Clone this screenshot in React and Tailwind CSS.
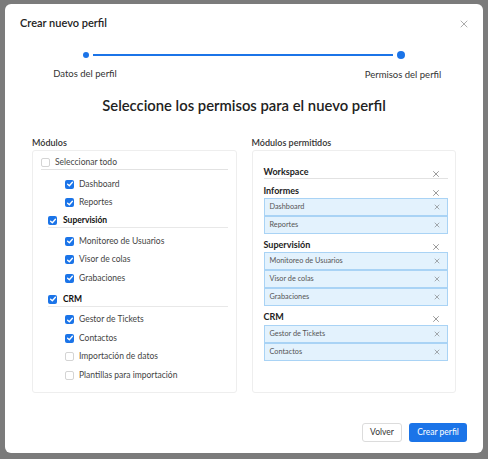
import { X } from 'lucide-react';

const font = { fontFamily: 'Lato, "Noto Sans", sans-serif' };

const leftGroups = [
  { title: null, items: [['Dashboard', true], ['Reportes', true]] },
  {
    title: 'Supervisión',
    items: [['Monitoreo de Usuarios', true], ['Visor de colas', true], ['Grabaciones', true]],
  },
  {
    title: 'CRM',
    items: [
      ['Gestor de Tickets', true],
      ['Contactos', true],
      ['Importación de datos', false],
      ['Plantillas para importación', false],
    ],
  },
];

const rightGroups = [
  { title: 'Workspace', items: [] },
  { title: 'Informes', items: ['Dashboard', 'Reportes'] },
  { title: 'Supervisión', items: ['Monitoreo de Usuarios', 'Visor de colas', 'Grabaciones'] },
  { title: 'CRM', items: ['Gestor de Tickets', 'Contactos'] },
];

function Checkbox({ checked }) {
  if (!checked) {
    return <span className="h-[9px] w-[9px] shrink-0 rounded-[2px] border border-[#d4d4d4] bg-white" />;
  }
  return (
    <span className="flex h-[9px] w-[9px] shrink-0 items-center justify-center rounded-[2px] bg-[#1b74e8]">
      <svg viewBox="0 0 10 10" className="h-[8px] w-[8px]">
        <polyline points="2,5.2 4.2,7.2 8,2.9" fill="none" stroke="white" strokeWidth="1.7" strokeLinecap="round" strokeLinejoin="round" />
      </svg>
    </span>
  );
}

export default function App() {
  return (
    <div className="h-[459px] w-[488px] bg-[#7b7b7b] pl-[5px] pt-[4px]" style={font}>
      <div className="flex h-[449px] w-[478px] flex-col rounded-[6px] bg-white">
        <div className="flex h-[38px] items-center justify-between pl-[15px] pr-[13px]">
          <span className="text-[11px] font-semibold text-[#222]">Crear nuevo perfil</span>
          <X className="mt-[2px] h-[12px] w-[12px] text-[#888]" strokeWidth={1.4} />
        </div>

        <div className="mt-[9px] flex h-[8px] items-center pl-[78px] pr-[78px]">
          <span className="h-[6px] w-[6px] rounded-full bg-[#1b74e8]" />
          <span className="mx-[4px] h-[2px] flex-1 bg-[#1b74e8]" />
          <span className="h-[8px] w-[8px] rounded-full bg-[#1b74e8]" />
        </div>
        <div className="mt-[8px] flex h-[14px] items-center justify-between px-[30px] text-[9.5px] text-[#333]">
          <span className="w-[100px] text-center">Datos del perfil</span>
          <span className="mt-[2px] w-[100px] text-center">Permisos del perfil</span>
        </div>

        <h1 className="mt-[12px] h-[24px] text-center text-[14.8px] font-semibold leading-[24px] text-[#222]">
          Seleccione los permisos para el nuevo perfil
        </h1>

        <div className="mt-[19px] grid grid-cols-2 gap-[15px] px-[27px]">
          <div>
            <div className="h-[14px] text-[9px] font-semibold leading-[14px] text-[#333]">Módulos</div>
            <div className="h-[243px] rounded-[3px] border border-[#eeeeee] px-[8px] pt-[5px] text-[8.5px] text-[#444]">
              <div className="flex h-[14px] items-center gap-[5px] border-b border-[#e2e2e2] pb-[1px]">
                <Checkbox checked={false} />
                <span>Seleccionar todo</span>
              </div>
              <div className="mt-[5px]">
                {leftGroups.map((group, gi) => (
                  <div key={gi} className="ml-[7px]">
                    {group.title && (
                      <div className={`flex h-[14px] items-center gap-[6px] border-b border-[#e8e8e8] pr-[3px] ${gi === 1 ? 'mt-[2px]' : 'mt-[5px]'}`}>
                        <Checkbox checked />
                        <span className="font-bold text-[#111]">{group.title}</span>
                      </div>
                    )}
                    <div className={group.title ? 'mt-[4px]' : ''}>
                      {group.items.map(([label, checked]) => (
                        <div key={label} className="ml-[17px] flex h-[18.5px] items-center gap-[5px]">
                          <Checkbox checked={checked} />
                          <span>{label}</span>
                        </div>
                      ))}
                    </div>
                  </div>
                ))}
              </div>
            </div>
          </div>

          <div>
            <div className="h-[14px] text-[9px] font-semibold leading-[14px] text-[#333]">Módulos permitidos</div>
            <div className="h-[243px] rounded-[3px] border border-[#eeeeee] pl-[11px] pr-[7px] pt-[14px]">
              {rightGroups.map((group, gi) => (
                <div key={group.title} className={gi === 0 ? '' : gi === 1 ? 'mt-[5px]' : 'mt-[4px]'}>
                  <div
                    className={`flex h-[14px] items-center justify-between pr-[7px] text-[9px] font-bold text-[#222] ${
                      group.items.length === 0 ? 'border-b border-[#e2e2e2]' : ''
                    }`}
                  >
                    <span>{group.title}</span>
                    <X className="mt-[4px] h-[10px] w-[10px] text-[#555]" strokeWidth={1.4} />
                  </div>
                  <div className={gi === 3 ? 'mt-[1px]' : ''}>
                    {group.items.map((item) => (
                      <div
                        key={item}
                        className="flex h-[18px] items-center justify-between border border-[#a9d3f5] bg-[#e3f2fd] pl-[5px] pr-[6px] text-[7.3px] text-[#555]"
                      >
                        <span>{item}</span>
                        <X className="h-[8px] w-[8px] text-[#666]" strokeWidth={1.6} />
                      </div>
                    ))}
                  </div>
                </div>
              ))}
            </div>
          </div>
        </div>

        <div className="mt-[30px] flex justify-end gap-[7px] pr-[16px]">
          <button className="h-[19px] w-[40px] rounded-[3px] border border-[#dcdcdc] bg-white text-[8.5px] text-[#333]">
            Volver
          </button>
          <button className="h-[19px] w-[58px] rounded-[3px] bg-[#1b74e8] text-[8.5px] text-white">
            Crear perfil
          </button>
        </div>
      </div>
    </div>
  );
}
